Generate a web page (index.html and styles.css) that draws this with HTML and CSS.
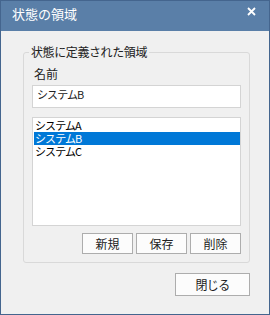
FILE: index.html
```html
<!DOCTYPE html>
<html lang="ja">
<head>
<meta charset="utf-8">
<link rel="stylesheet" href="styles.css">
</head>
<body>
<div class="window">
  <div class="titlebar">
    <span class="title">状態の領域</span>
    <svg class="close-x" width="9" height="9" viewBox="0 0 9 9"><path d="M1 1L8 8M8 1L1 8" stroke="#ffffff" stroke-width="1.8" fill="none"/></svg>
  </div>
  <div class="body">
    <fieldset class="group">
      <legend class="legend">状態に定義された領域</legend>
      <div class="label">名前</div>
      <div class="input">システムB</div>
      <ul class="list">
        <li class="item">システムA</li>
        <li class="item sel">システムB</li>
        <li class="item">システムC</li>
      </ul>
      <div class="btnrow">
        <button class="btn small">新規</button>
        <button class="btn small">保存</button>
        <button class="btn small">削除</button>
      </div>
    </fieldset>
    <div class="footer">
      <button class="btn closebtn">閉じる</button>
    </div>
  </div>
</div>
</body>
</html>
```

FILE: styles.css
```css
* { box-sizing: border-box; }
html, body { margin: 0; padding: 0; }
body {
  font-family: "Noto Sans CJK JP", "Noto Sans", sans-serif;
  font-size: 12px;
  color: #1a1a1a;
  background: #f0f0f0;
}
.window {
  width: 270px;
  height: 315px;
  border: 1px solid #44658e;
  background: #f0f0f0;
  display: flex;
  flex-direction: column;
}
.titlebar {
  height: 30px;
  background: #5a7fa8;
  display: flex;
  align-items: center;
  justify-content: space-between;
  padding: 0 13px 4px 11px;
}
.title {
  color: #ffffff;
  font-size: 13px;
  line-height: 16px;
}
.close-x { display: block; margin-top: -5px; }
.body {
  padding: 14px 19px 0 22px;
  display: flex;
  flex-direction: column;
}
.group {
  margin: 0;
  border: 1px solid #d9d9d9;
  border-radius: 3px;
  padding: 8px 8px 8px 8px;
  min-width: 0;
}
.legend {
  padding: 0 2px;
  margin-left: -3px;
  line-height: 14px;
  color: #222;
  letter-spacing: -0.4px;
}
.label {
  line-height: 14px;
  color: #222;
  padding-left: 2px;
}
.input {
  margin-top: 4px;
  height: 23px;
  background: #ffffff;
  border: 1px solid #d4d4d4;
  padding: 1px 4px;
  line-height: 14px;
  color: #222;
  font-size: 11px;
  letter-spacing: -0.9px;
}
.list {
  list-style: none;
  margin: 9px 0 0 0;
  height: 109px;
  background: #ffffff;
  border: 1px solid #d4d4d4;
  padding: 1px 0 1px 1px;
}
.item {
  height: 13px;
  line-height: 13px;
  color: #000;
  padding-left: 1px;
  font-size: 11px;
  letter-spacing: -0.9px;
}
.item.sel {
  background: #0078d7;
  color: #ffffff;
}
.btnrow {
  margin-top: 7px;
  display: flex;
  justify-content: flex-end;
  gap: 3px;
}
.btn {
  font-family: "Noto Sans CJK JP", "Noto Sans", sans-serif;
  font-size: 12px;
  color: #222;
  background: #fcfcfc;
  border: 1px solid #adadad;
  border-radius: 0;
  padding: 0;
  margin: 0;
  line-height: 14px;
}
.small {
  width: 51px;
  height: 21px;
}
.footer {
  margin-top: 10px;
  display: flex;
  justify-content: flex-end;
}
.closebtn {
  width: 75px;
  height: 23px;
  letter-spacing: -0.6px;
}
```
